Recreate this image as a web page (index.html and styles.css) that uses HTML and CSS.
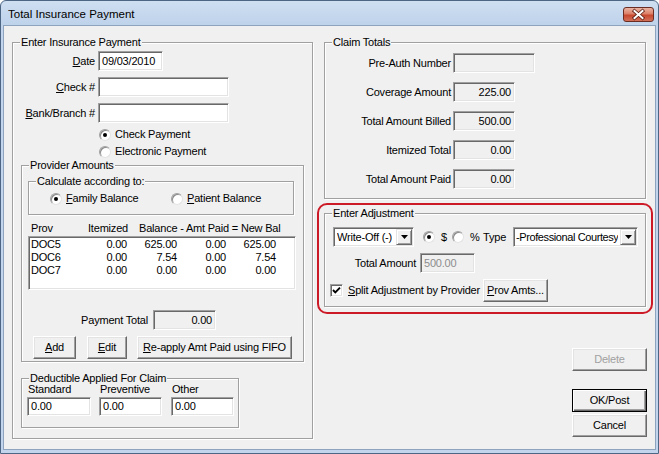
FILE: index.html
```html
<!DOCTYPE html>
<html>
<head>
<meta charset="utf-8">
<title>Total Insurance Payment</title>
<link rel="stylesheet" href="styles.css">
</head>
<body>
<div class="window">
  <div class="titlebar">
    <span class="title">Total Insurance Payment</span>
    <div class="close-btn">
      <svg width="29" height="13" viewBox="0 0 29 13">
        <path d="M10.5 3 L18.5 10 M18.5 3 L10.5 10" stroke="#5a1d12" stroke-width="3.6" stroke-linecap="square"/>
        <path d="M10.5 3 L18.5 10 M18.5 3 L10.5 10" stroke="#ffffff" stroke-width="2" stroke-linecap="square"/>
      </svg>
    </div>
  </div>
  <div class="client">
    <fieldset class="grp grp-payment">
      <legend>Enter Insurance Payment</legend>
      <div class="frow frow-first">
        <span class="flabel"><u>D</u>ate</span>
        <div class="edit w-date">09/03/2010</div>
      </div>
      <div class="frow">
        <span class="flabel"><u>C</u>heck #</span>
        <div class="edit w-check"></div>
      </div>
      <div class="frow">
        <span class="flabel"><u>B</u>ank/Branch #</span>
        <div class="edit w-check"></div>
      </div>
      <div class="pay-type">
        <div class="radio-row"><span class="radio on"></span><span>Check Payment</span></div>
        <div class="radio-row"><span class="radio"></span><span>Electronic Payment</span></div>
      </div>

      <fieldset class="grp grp-provider">
        <legend>Provider Amounts</legend>
        <fieldset class="grp grp-calc">
          <legend>Calculate according to:</legend>
          <div class="calc-row">
            <div class="radio-row calc-opt"><span class="radio on"></span><span><u>F</u>amily Balance</span></div>
            <div class="radio-row"><span class="radio"></span><span><u>P</u>atient Balance</span></div>
          </div>
        </fieldset>
        <div class="list-head">
          <span class="lh-prov">Prov</span>
          <span class="lh-item">Itemized</span>
          <span class="lh-rest">Balance - Amt Paid = New Bal</span>
        </div>
        <div class="listbox">
          <div class="lrow"><span class="c-prov">DOC5</span><span class="c-num c-item">0.00</span><span class="c-num">625.00</span><span class="c-num c-paid">0.00</span><span class="c-num">625.00</span></div>
          <div class="lrow"><span class="c-prov">DOC6</span><span class="c-num c-item">0.00</span><span class="c-num">7.54</span><span class="c-num c-paid">0.00</span><span class="c-num">7.54</span></div>
          <div class="lrow"><span class="c-prov">DOC7</span><span class="c-num c-item">0.00</span><span class="c-num">0.00</span><span class="c-num c-paid">0.00</span><span class="c-num">0.00</span></div>
        </div>
        <div class="total-row">
          <span class="total-label">Payment Total</span>
          <div class="edit ro w-total">0.00</div>
        </div>
        <div class="btn-row">
          <div class="btn b-add"><span><u>A</u>dd</span></div>
          <div class="btn b-edit"><span><u>E</u>dit</span></div>
          <div class="btn b-fifo"><span><u>R</u>e-apply Amt Paid using FIFO</span></div>
        </div>
      </fieldset>

      <fieldset class="grp grp-deduct">
        <legend>Deductible Applied For Claim</legend>
        <div class="deduct-row">
          <div class="dcol dcol-1"><span class="dlabel">Standard</span><div class="edit dedit">0.00</div></div>
          <div class="dcol dcol-2"><span class="dlabel">Preventive</span><div class="edit dedit">0.00</div></div>
          <div class="dcol dcol-3"><span class="dlabel">Other</span><div class="edit dedit">0.00</div></div>
        </div>
      </fieldset>
    </fieldset>

    <div class="right-col">
      <fieldset class="grp grp-claim">
        <legend>Claim Totals</legend>
        <div class="crow crow-first"><span class="clabel">Pre-Auth Number</span><div class="edit ro w-preauth"></div></div>
        <div class="crow"><span class="clabel">Coverage Amount</span><div class="edit ro w-amt">225.00</div></div>
        <div class="crow"><span class="clabel">Total Amount Billed</span><div class="edit ro w-amt">500.00</div></div>
        <div class="crow"><span class="clabel">Itemized Total</span><div class="edit ro w-amt">0.00</div></div>
        <div class="crow"><span class="clabel">Total Amount Paid</span><div class="edit ro w-amt">0.00</div></div>
      </fieldset>

      <div class="highlight">
        <fieldset class="grp grp-adjust">
          <legend>Enter Adjustment</legend>
          <div class="arow arow-1">
            <div class="edit combo w-writeoff">
              <span class="combo-text">Write-Off (-)</span>
              <span class="combo-btn"><svg width="7" height="4" viewBox="0 0 7 4"><path d="M0 0 H7 L3.5 4 Z" fill="#000"/></svg></span>
            </div>
            <span class="radio on r-dollar"></span><span class="sym-dollar">$</span>
            <span class="radio"></span><span class="sym-pct">%</span>
            <span class="type-label">Type</span>
            <div class="edit combo w-type">
              <span class="combo-text tight">-Professional Courtesy</span>
              <span class="combo-btn"><svg width="7" height="4" viewBox="0 0 7 4"><path d="M0 0 H7 L3.5 4 Z" fill="#000"/></svg></span>
            </div>
          </div>
          <div class="arow arow-2">
            <span class="alabel">Total Amount</span>
            <div class="edit disabled w-totamt">500.00</div>
          </div>
          <div class="arow arow-3">
            <span class="checkbox"><svg width="9" height="9" viewBox="0 0 9 9"><path d="M1 4 L3.3 6.4 L8 1.6" stroke="#000" stroke-width="1.9" fill="none"/></svg></span>
            <span class="split-label"><u>S</u>plit Adjustment by Provider</span>
            <div class="btn b-prov"><span><u>P</u>rov Amts...</span></div>
          </div>
        </fieldset>
      </div>

      <div class="btn side-btn b-delete is-disabled"><span>Delete</span></div>
      <div class="btn side-btn b-ok is-default"><span>OK/Post</span></div>
      <div class="btn side-btn b-cancel"><span>Cancel</span></div>
    </div>
  </div>
</div>
</body>
</html>
```

FILE: styles.css
```css
html, body {
  margin: 0;
  padding: 0;
  background: #ffffff;
}

.window {
  width: 659px;
  height: 454px;
  box-sizing: border-box;
  border: 1px solid #4d6684;
  border-radius: 6px 6px 0 0;
  background: linear-gradient(to bottom, #cfdff2 0px, #bed2ea 24px, #c2d5ec 25px, #c2d5ec 100%);
  padding: 0 2px 3px 2px;
  display: flex;
  flex-direction: column;
}

.titlebar {
  height: 24px;
  flex: none;
  display: flex;
  align-items: flex-start;
}

.title {
  margin: 5px 0 0 5px;
  font-family: "Liberation Sans", Arial, sans-serif;
  font-size: 11.5px;
  line-height: 16px;
  color: #000;
}

.close-btn {
  margin: 6px 2px 0 auto;
  width: 31px;
  height: 15px;
  box-sizing: border-box;
  border: 1px solid #6b2c22;
  border-radius: 3px;
  background: linear-gradient(to bottom, #eab3a2 0%, #dc8068 45%, #c7482e 55%, #d2705a 100%);
  display: flex;
  align-items: center;
  justify-content: center;
}

.client {
  flex: 1;
  background: #f0f0f0;
  border: 1px solid #8ea3bd;
  display: flex;
  align-items: flex-start;
  font-family: "Liberation Sans", Arial, sans-serif;
  font-size: 11px;
  line-height: 13px;
  letter-spacing: -0.2px;
  color: #000;
}

/* group boxes */
.grp {
  margin: 0;
  padding: 0;
  min-width: 0;
  box-sizing: border-box;
  border: 1px solid #a0a0a0;
  box-shadow: inset 1px 1px 0 #ffffff, 1px 1px 0 #ffffff;
}

.grp > legend {
  padding: 0 1px;
  margin-left: 7px;
  line-height: 13px;
  background: #f0f0f0;
}

.grp-payment {
  margin: 10px 0 0 8px;
  width: 301px;
  padding-bottom: 10px;
}

/* label + field rows */
.frow {
  display: flex;
  align-items: center;
  margin-top: 6px;
}

.frow-first {
  margin-top: 2px;
}

.flabel {
  width: 82px;
  margin-right: 3px;
  text-align: right;
  white-space: nowrap;
}

.edit {
  box-sizing: border-box;
  height: 20px;
  background: #ffffff;
  border: 1px solid;
  border-color: #a0a0a0 #ffffff #ffffff #a0a0a0;
  box-shadow: inset 1px 1px 0 #696969, inset -1px -1px 0 #e3e3e3;
  padding: 0 3px;
  display: flex;
  align-items: center;
  white-space: nowrap;
  overflow: hidden;
  flex: none;
}

.edit.ro {
  background: #f0f0f0;
  justify-content: flex-end;
}

.edit.disabled {
  background: #f0f0f0;
  color: #8d8d8d;
}

.w-date { width: 65px; }
.w-check { width: 131px; }

/* radios */
.pay-type {
  margin: 3px 0 0 86px;
}

.radio-row {
  height: 17px;
  display: flex;
  align-items: center;
  white-space: nowrap;
}

.radio {
  width: 12px;
  height: 12px;
  box-sizing: border-box;
  border-radius: 50%;
  background: #ffffff;
  border: 1px solid;
  border-color: #a0a0a0 #e3e3e3 #e3e3e3 #a0a0a0;
  box-shadow: inset 1px 1px 0 #8a8a8a;
  display: flex;
  align-items: center;
  justify-content: center;
  flex: none;
}

.radio-row .radio {
  margin-right: 4px;
}

.radio.on::after {
  content: "";
  width: 4px;
  height: 4px;
  border-radius: 50%;
  background: #000000;
}

/* provider amounts */
.grp-provider {
  margin: -1px 0 0 8px;
  width: 283px;
  padding-bottom: 2px;
}

.grp-calc {
  margin: 3px 0 0 6px;
  width: 266px;
  padding-bottom: 7px;
}

.calc-row {
  display: flex;
  margin: 2px 0 0 21px;
}

.calc-opt {
  width: 121px;
}

.list-head {
  display: flex;
  margin: 7px 0 0 9px;
  white-space: nowrap;
}

.lh-prov { width: 47px; }
.lh-item { width: 50px; text-align: right; }
.lh-rest { margin-left: 11px; }

.listbox {
  box-sizing: border-box;
  margin: 1px 0 0 6px;
  width: 268px;
  height: 54px;
  background: #ffffff;
  border: 1px solid;
  border-color: #a0a0a0 #ffffff #ffffff #a0a0a0;
  box-shadow: inset 1px 1px 0 #696969, inset -1px -1px 0 #e3e3e3;
  padding: 1px 0 0 2px;
}

.lrow {
  display: flex;
  height: 13px;
  white-space: nowrap;
}

.c-prov { width: 46px; }
.c-num { width: 50px; text-align: right; }
.c-paid { width: 49px; }

.total-row {
  display: flex;
  align-items: center;
  margin-top: 20px;
}

.total-label {
  width: 126px;
  margin-right: 5px;
  text-align: right;
}

.w-total { width: 63px; }

.btn-row {
  display: flex;
  margin: 6px 0 0 11px;
}

.btn {
  box-sizing: border-box;
  height: 23px;
  background: #f0f0f0;
  border: 1px solid;
  border-color: #ffffff #696969 #696969 #ffffff;
  box-shadow: inset -1px -1px 0 #a0a0a0, inset 1px 1px 0 #e3e3e3;
  display: flex;
  align-items: center;
  justify-content: center;
  white-space: nowrap;
  flex: none;
}

.b-add { width: 43px; }
.b-edit { width: 40px; margin-left: 11px; }
.b-fifo { width: 155px; margin-left: 10px; }

/* deductible */
.grp-deduct {
  margin: 10px 0 0 8px;
  width: 218px;
  padding-bottom: 11px;
}

.deduct-row {
  display: flex;
  margin-top: -2px;
}

.dcol {
  display: flex;
  flex-direction: column;
  width: 64px;
}

.dcol-1 { margin-left: 5px; }
.dcol-2 { margin-left: 8px; width: 63px; }
.dcol-3 { margin-left: 9px; width: 63px; }

.dlabel {
  padding-left: 1px;
  white-space: nowrap;
}

.dedit {
  margin-top: 1px;
  height: 19px;
  width: 100%;
}

/* right column */
.right-col {
  margin: 10px 0 0 4px;
  width: 336px;
  display: flex;
  flex-direction: column;
}

.grp-claim {
  margin-left: 7px;
  width: 322px;
  padding-bottom: 9px;
}

.crow {
  display: flex;
  align-items: center;
  margin-top: 9px;
}

.crow-first { margin-top: 4px; }

.clabel {
  width: 126px;
  margin-right: 2px;
  text-align: right;
  white-space: nowrap;
}

.w-preauth { width: 82px; }
.w-amt { width: 62px; }

.highlight {
  margin-top: 4px;
  border: 2px solid #cc1a26;
  border-radius: 10px;
  padding: 2px 5px 5px 5px;
}

.grp-adjust {
  width: 322px;
  padding-bottom: 4px;
}

.arow {
  display: flex;
  align-items: center;
  margin-top: 6px;
  white-space: nowrap;
}

.arow-1 { margin-top: 7px; }

.combo {
  padding-right: 1px;
  justify-content: space-between;
}

.combo-text {
  overflow: hidden;
}

.combo-text.tight {
  letter-spacing: -0.4px;
}

.combo-btn {
  box-sizing: border-box;
  width: 16px;
  height: 16px;
  flex: none;
  background: #f0f0f0;
  border: 1px solid;
  border-color: #e3e3e3 #696969 #696969 #e3e3e3;
  box-shadow: inset 1px 1px 0 #ffffff, inset -1px -1px 0 #a0a0a0;
  display: flex;
  align-items: center;
  justify-content: center;
}

.w-writeoff { width: 81px; margin-left: 8px; }
.r-dollar { margin-left: 9px; }
.sym-dollar { width: 11px; margin-left: 6px; }
.sym-pct { width: 13px; margin-left: 6px; }
.type-label { width: 30px; }
.w-type { width: 125px; padding-left: 2px; }

.alabel {
  width: 91px;
  margin-right: 4px;
  text-align: right;
}

.w-totamt { width: 55px; }

.checkbox {
  box-sizing: border-box;
  width: 13px;
  height: 13px;
  margin-left: 5px;
  background: #ffffff;
  border: 1px solid;
  border-color: #a0a0a0 #ffffff #ffffff #a0a0a0;
  box-shadow: inset 1px 1px 0 #696969, inset -1px -1px 0 #e3e3e3;
  display: flex;
  align-items: center;
  justify-content: center;
  flex: none;
}

.split-label {
  width: 135px;
  margin-left: 5px;
}

.b-prov { width: 65px; }

.side-btn {
  width: 75px;
  align-self: flex-end;
  margin-right: 6px;
}

.b-delete { margin-top: 34px; }
.b-ok { margin-top: 18px; }
.b-cancel { margin-top: 2px; }

.is-disabled {
  color: #a0a0a0;
}

.is-default {
  border-color: #000000;
  box-shadow: inset 1px 1px 0 #ffffff, inset -1px -1px 0 #696969, inset -2px -2px 0 #a0a0a0;
}
```
